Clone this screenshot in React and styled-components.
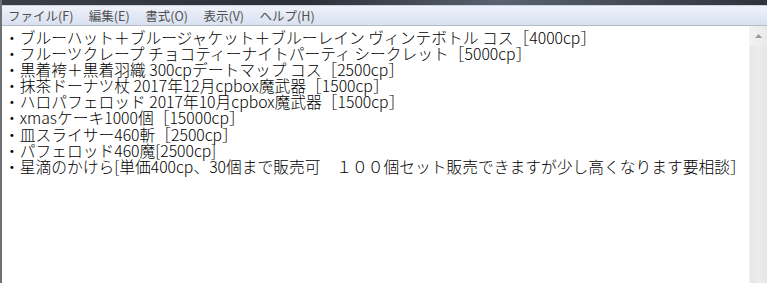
import React from "react";
import styled, { createGlobalStyle } from "styled-components";

const GlobalStyle = createGlobalStyle`
  html, body {
    margin: 0;
    padding: 0;
    background: #ffffff;
  }
`;

const Window = styled.div`
  width: 767px;
  height: 283px;
  overflow: hidden;
  display: flex;
  flex-direction: column;
  border-left: 2px solid #6e7075;
  box-sizing: border-box;
`;

const TitleStrip = styled.div`
  height: 5px;
  background: linear-gradient(90deg, #3a3f48 0%, #2b3038 40%, #5a6270 65%, #2e333b 100%);
  border-bottom: 1px solid #c9d3e3;
`;

const MenuBar = styled.div`
  height: 19px;
  display: flex;
  align-items: center;
  padding-left: 6px;
  background: linear-gradient(180deg, #eef2fa 0%, #e3e9f5 50%, #d9e1f0 100%);
  border-bottom: 1px solid #b5bcc8;
  font-family: "Noto Sans CJK JP", sans-serif;
  font-size: 12.5px;
  color: #505050;
`;

const MenuItem = styled.span`
  margin-right: 15.5px;
`;

const Body = styled.div`
  flex: 1;
  display: flex;
  background: #ffffff;
`;

const Editor = styled.div`
  flex: 1;
  min-width: 0;
  padding: 4px 0 0 2px;
  font-family: "Noto Sans CJK JP", sans-serif;
  font-weight: 300;
  font-size: 15.75px;
  line-height: 16px;
  color: #000000;
  white-space: pre;
`;

const Line = styled.div`
  height: 16.1px;
`;

const Scrollbar = styled.div`
  width: 17px;
  flex-shrink: 0;
  display: flex;
  flex-direction: column;
  background: linear-gradient(90deg, #e6e6e6 0%, #ececec 50%, #e6e6e6 100%);
  border-left: 1px solid #f3f3f3;
`;

const ArrowButton = styled.div`
  height: 20px;
  display: flex;
  align-items: center;
  justify-content: center;
  background: linear-gradient(90deg, #f2f2f2 0%, #eaeaea 100%);
`;

const lines = [
  "・ブルーハット＋ブルージャケット＋ブルーレイン ヴィンテボトル コス［4000cp］",
  "・フルーツクレープ チョコティーナイトパーティ シークレット［5000cp］",
  "・黒着袴＋黒着羽織 300cpデートマップ コス［2500cp］",
  "・抹茶ドーナツ杖 2017年12月cpbox魔武器［1500cp］",
  "・ハロパフェロッド 2017年10月cpbox魔武器［1500cp］",
  "・xmasケーキ1000個［15000cp］",
  "・皿スライサー460斬［2500cp］",
  "・パフェロッド460魔[2500cp]",
  "・星滴のかけら[単価400cp、30個まで販売可　１００個セット販売できますが少し高くなります要相談］",
];

export default function App() {
  return (
    <>
      <GlobalStyle />
      <Window>
        <TitleStrip />
        <MenuBar>
          <MenuItem>ファイル(F)</MenuItem>
          <MenuItem>編集(E)</MenuItem>
          <MenuItem>書式(O)</MenuItem>
          <MenuItem>表示(V)</MenuItem>
          <MenuItem>ヘルプ(H)</MenuItem>
        </MenuBar>
        <Body>
          <Editor>
            {lines.map((t, i) => (
              <Line key={i}>{t}</Line>
            ))}
          </Editor>
          <Scrollbar>
            <ArrowButton>
              <svg width="7" height="4" viewBox="0 0 7 4">
                <path d="M0 4 L3.5 0 L7 4 Z" fill="#9a9a9a" />
              </svg>
            </ArrowButton>
          </Scrollbar>
        </Body>
      </Window>
    </>
  );
}
